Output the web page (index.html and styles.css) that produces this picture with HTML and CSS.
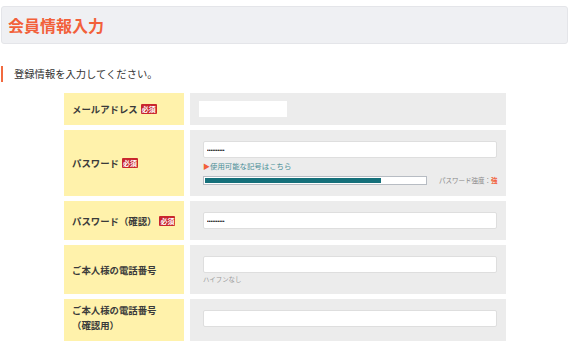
FILE: index.html
```html
<!DOCTYPE html>
<html lang="ja">
<head>
  <meta charset="UTF-8">
  <meta name="viewport" content="width=device-width, initial-scale=1.0">
  <title>会員情報入力</title>
  <link rel="stylesheet" href="styles.css">
</head>
<body>
  <div class="page-title">
    <h1>会員情報入力</h1>
  </div>

  <p class="lead">登録情報を入力してください。</p>

  <div class="form-table">
    <div class="label">メールアドレス<span class="req">必須</span></div>
    <div class="value">
      <div class="mail"></div>
    </div>

    <div class="label">パスワード<span class="req">必須</span></div>
    <div class="value">
      <input class="field" type="password" value="password12">
      <a class="note-link" href="#"><span class="arrow">▶</span>使用可能な記号はこちら</a>
      <div class="strength">
        <div class="bar"><div class="fill" style="width: 80%"></div></div>
        <span class="strength-text">パスワード強度：<em>強</em></span>
      </div>
    </div>

    <div class="label">パスワード（確認）<span class="req">必須</span></div>
    <div class="value">
      <input class="field" type="password" value="password12">
    </div>

    <div class="label">ご本人様の電話番号</div>
    <div class="value">
      <input class="field" type="text">
      <span class="hint">ハイフンなし</span>
    </div>

    <div class="label label-top">ご本人様の電話番号<br>（確認用）</div>
    <div class="value value-last">
      <input class="field" type="text">
    </div>
  </div>
</body>
</html>
```

FILE: styles.css
```css
body {
  font-family: "Noto Sans CJK JP", "Noto Sans", sans-serif;
  margin: 0;
  padding: 6px 1px 0;
  color: #333;
  background: #fff;
}
.page-title {
  height: 36px;
  background-color: #eff0f3;
  border: 1px solid #e4e5e9;
  border-radius: 3px;
  display: flex;
  align-items: center;
  padding-left: 6px;
}
h1 {
  margin: 0;
  font-size: 16px;
  font-weight: bold;
  color: #f2603a;
}
.lead {
  margin: 22px 0 0;
  padding: 1px 0 1px 11px;
  border-left: 2px solid #f26a3f;
  font-size: 10.3px;
  line-height: 14px;
}
.form-table {
  display: grid;
  grid-template-columns: 120px 316px;
  gap: 5px 6px;
  width: 442px;
  margin: 11px 0 0 63px;
}
.label {
  background-color: #fff2ab;
  display: flex;
  align-items: center;
  padding-left: 8px;
  font-size: 9.4px;
  font-weight: bold;
  color: #3a3a3a;
  line-height: 16px;
  flex-wrap: wrap;
}
.label-top {
  display: block;
  padding-top: 4px;
  line-height: 15px;
}
.req {
  display: inline-block;
  background-color: #c9262d;
  color: #fff;
  font-size: 7px;
  line-height: 10px;
  padding: 0 1px;
  margin-left: 3px;
  border-radius: 1px;
}
.value {
  background-color: #ececec;
  padding: 11px 9px 11px 13px;
  display: flex;
  flex-direction: column;
  align-items: flex-start;
}
.value-last {
  padding-bottom: 18px;
}
.mail {
  width: 88px;
  height: 16px;
  background: #fff;
  margin: -3px 0 -3px -4px;
}
.field {
  width: 294px;
  height: 17px;
  box-sizing: border-box;
  border: 1px solid #dedede;
  border-radius: 2px;
  background: #fff;
  font-size: 5px;
  padding: 0 3px;
  margin: 0;
}
.note-link {
  margin-top: 3px;
  font-size: 7.4px;
  line-height: 10px;
  color: #4b8f98;
  text-decoration: none;
}
.arrow {
  color: #f2603a;
  font-size: 7px;
}
.strength {
  margin-top: 4px;
  display: flex;
  align-items: center;
  width: 294px;
  white-space: nowrap;
}
.bar {
  width: 224px;
  height: 9px;
  flex-shrink: 0;
  box-sizing: border-box;
  border: 1px solid #b7bcc3;
  background: #fff;
  padding: 1px;
}
.fill {
  height: 100%;
  background-color: #15707a;
}
.strength-text {
  margin-left: 12px;
  font-size: 6.5px;
  color: #888;
}
.strength-text em {
  font-style: normal;
  font-weight: bold;
  color: #f2603a;
}
.hint {
  margin-top: 2px;
  margin-bottom: -1px;
  font-size: 6.4px;
  line-height: 9px;
  color: #999;
}
```
